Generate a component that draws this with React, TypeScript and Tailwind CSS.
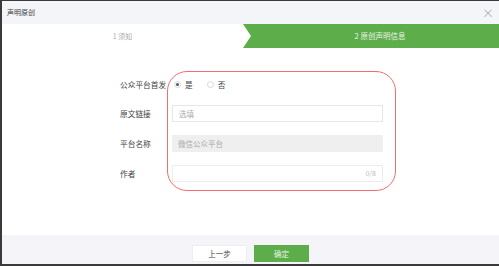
import React from 'react';

const font = { fontFamily: '"Noto Sans CJK SC", "Noto Sans", sans-serif' };

function FormRow({ label, children }: { label: string; children: React.ReactNode }) {
  return (
    <div className="flex items-center h-[17px]">
      <div className="w-[52px] shrink-0 text-[7.7px] text-[#444] leading-none">{label}</div>
      <div className="w-[211px] h-full flex items-center">{children}</div>
    </div>
  );
}

function Radio({ checked, label }: { checked?: boolean; label: string }) {
  return (
    <div className="flex items-center gap-[4px]">
      <span className="w-[7px] h-[7px] rounded-full border border-[#d8d8d8] flex items-center justify-center">
        {checked && <span className="w-[3px] h-[3px] rounded-full bg-[#555]" />}
      </span>
      <span className="text-[7.7px] text-[#444] leading-none">{label}</span>
    </div>
  );
}

export default function App() {
  return (
    <div className="relative w-[499px] h-[266px] bg-[#3a3a3a] pl-[2px] pt-[1px] pb-[2px] overflow-hidden" style={font}>
      <div className="flex flex-col h-full bg-white">
        {/* header */}
        <div className="h-[23px] shrink-0 bg-[#f4f5f9] flex items-center justify-between pl-[5px] pr-[5px]">
          <span className="text-[7px] text-[#444] leading-none">声明原创</span>
          <span className="text-[12px] text-[#999] leading-none font-light">×</span>
        </div>

        {/* steps */}
        <div className="h-[24px] shrink-0 flex">
          <div className="w-[241px] flex items-center justify-center text-[7px] text-[#aaa]">1 须知</div>
          <div className="flex-1 bg-[#5dad4a] [clip-path:polygon(0_0,100%_0,100%_100%,0_100%,8px_50%)] flex items-center justify-center pl-[18px] text-[7.5px] text-[#e8f4e4]">
            2 原创声明信息
          </div>
        </div>

        {/* form */}
        <div className="flex flex-col pl-[118px] pt-[29px] gap-[13px]">
          <div className="flex items-center h-[15px]">
            <div className="w-[52px] shrink-0 text-[7.7px] text-[#444] leading-none">公众平台首发</div>
            <div className="flex items-center gap-[14px] pl-[2px]">
              <Radio checked label="是" />
              <Radio label="否" />
            </div>
          </div>
          <FormRow label="原文链接">
            <div className="w-full h-full border border-[#e6e6e6] flex items-center px-[6px] text-[7.5px] text-[#aaa]">选填</div>
          </FormRow>
          <FormRow label="平台名称">
            <div className="w-full h-full bg-[#efefef] flex items-center px-[6px] text-[7.5px] text-[#aaa]">微信公众平台</div>
          </FormRow>
          <FormRow label="作者">
            <div className="w-full h-full border border-[#ececec] flex items-center justify-end px-[6px] text-[7px] text-[#bbb]">0/8</div>
          </FormRow>
        </div>

        <div className="flex-1" />

        {/* footer */}
        <div className="h-[29px] shrink-0 bg-[#f5f4f8] flex justify-center items-end gap-[7px] pb-[2px]">
          <div className="w-[55px] h-[17px] bg-white border border-[#eee] flex items-center justify-center text-[7.5px] text-[#444]">上一步</div>
          <div className="w-[55px] h-[17px] bg-[#5dad4a] flex items-center justify-center text-[7.5px] text-[#e8f4e4]">确定</div>
        </div>
      </div>

      {/* red annotation outline */}
      <div className="absolute left-[167px] top-[71px] w-[229px] h-[120px] rounded-[20px] border-[1.5px] border-[#f26d6d]" />
    </div>
  );
}
